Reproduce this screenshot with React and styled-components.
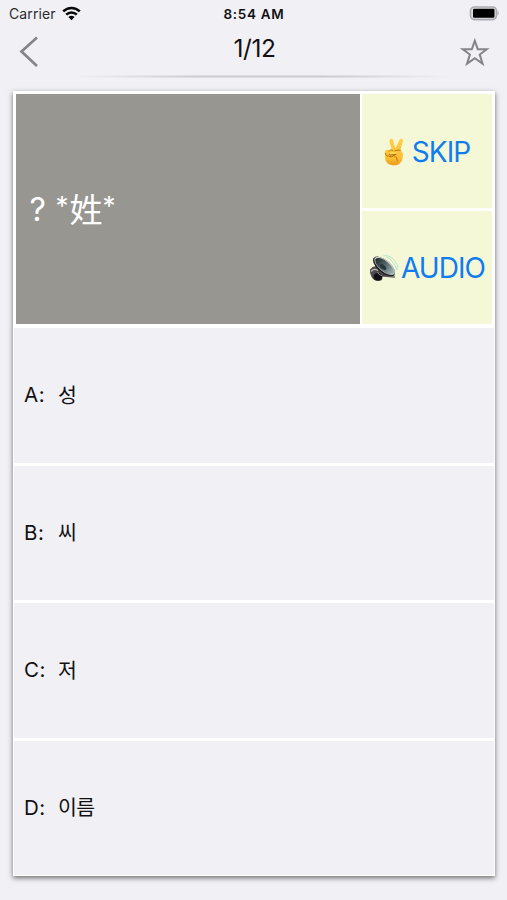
import React from "react";
import styled, { createGlobalStyle } from "styled-components";

const colors = {
  background: "#f0f0f5",
  text: "#111114",
  grey: "#979690",
  yellow: "#f5f8d7",
  blue: "#107cf0",
  icon: "#858589",
};

const GlobalStyle = createGlobalStyle`
  * {
    box-sizing: border-box;
  }

  body {
    margin: 0;
    background: ${colors.background};
    color: ${colors.text};
    font-family: Inter, "Noto Sans CJK KR", sans-serif;
  }
`;

const Screen = styled.div`
  height: 900px;
  width: 507px;
  overflow: hidden;
`;

const StatusBar = styled.div`
  display: grid;
  grid-template-columns: 1fr auto 1fr;
  align-items: center;
  height: 27px;
  padding: 0 7px 0 9px;
`;

const Carrier = styled.div`
  display: flex;
  align-items: center;
  gap: 6px;
  font-size: 14px;
  letter-spacing: 0.1px;
  color: #2c2c30;
`;

const Time = styled.div`
  margin-right: 1px;
  font-size: 13.5px;
  font-weight: 600;
  letter-spacing: 0.7px;
`;

const Battery = styled.svg`
  justify-self: end;
`;

const Header = styled.header`
  display: flex;
  justify-content: space-between;
  align-items: flex-start;
  height: 48px;
  padding: 0 17px 0 19px;
`;

const IconButton = styled.button`
  display: flex;
  width: 30px;
  margin-top: ${({ $top }) => $top};
  padding: 0;
  border: none;
  background: none;
`;

const Counter = styled.h1`
  margin: 6px 0 0;
  font-size: 24.5px;
  font-weight: 400;
  line-height: 30px;
  letter-spacing: -0.4px;
`;

const Divider = styled.div`
  height: 3px;
  margin: 0 57px 0 75px;
  background: linear-gradient(90deg, transparent, #c9c9cd 35%, #c9c9cd 65%, transparent);
  clip-path: inset(0.5px 0);
`;

const Card = styled.main`
  width: 482px;
  height: 785px;
  margin: 13px 0 0 13px;
  padding: 3px 0 1px;
  background: #fff;
  box-shadow: 0 2px 5px rgba(0, 0, 0, 0.55);
`;

const Top = styled.section`
  display: grid;
  grid-template-columns: 344px 130px;
  gap: 2.5px;
  height: 230px;
  margin: 0 2.5px 4px;
`;

const Question = styled.div`
  display: flex;
  align-items: center;
  padding: 0 0 2px 14px;
  background: ${colors.grey};
  color: #fff;
  font-family: "Noto Sans CJK SC", sans-serif;
  font-size: 33px;
  font-weight: 400;
`;

const Mark = styled.span`
  width: 26px;
  padding-top: 3px;
  font-family: Inter, sans-serif;
  font-size: 32px;
`;

const Star = styled.span`
  width: 14px;
  padding-bottom: 5px;
  font-family: Inter, sans-serif;
  font-size: 26px;
`;

const Actions = styled.div`
  display: grid;
  grid-template-rows: 1fr 1fr;
  gap: 3px;
`;

const Action = styled.button`
  display: flex;
  justify-content: center;
  align-items: center;
  gap: ${({ $gap }) => $gap};
  padding: 2px 0 0;
  border: none;
  background: ${colors.yellow};
  color: ${colors.blue};
  font-family: Inter, sans-serif;
  font-size: 28px;
  letter-spacing: ${({ $spacing }) => $spacing};
`;

const Answers = styled.section`
  display: grid;
  grid-template-rows: repeat(4, 1fr);
  gap: 3px;
  height: 547px;
  padding: 0 1px;
`;

const Answer = styled.div`
  display: flex;
  align-items: center;
  padding-left: 10px;
  background: ${colors.background};
  font-size: 20.5px;
  line-height: 30px;
`;

const Letter = styled.span`
  width: 34px;
  letter-spacing: 0.5px;
`;

const Word = styled.span`
  padding-bottom: 3px;
  font-family: "Noto Sans CJK KR", sans-serif;
  letter-spacing: -0.7px;
`;

const answers = [
  { letter: "A", word: "성" },
  { letter: "B", word: "씨" },
  { letter: "C", word: "저" },
  { letter: "D", word: "이름" },
];

const Wifi = () => (
  <svg width="19" height="15" viewBox="0 0 19 15">
    <g fill="none" stroke="#08080a" strokeWidth="2.6">
      <path d="M1.2 5.4C6 .8 13 .8 17.8 5.4" />
      <path d="M4.2 8.6C7.2 5.7 11.8 5.7 14.8 8.6" />
    </g>
    <path d="M6.4 11.1Q9.5 8.5 12.6 11.1L9.5 14.2Z" fill="#08080a" />
  </svg>
);

const Victory = () => (
  <svg width="20" height="28" viewBox="0 0 20 28">
    <defs>
      <linearGradient id="skin" x1="0" y1="0" x2="0" y2="1">
        <stop offset="0" stopColor="#ffd04b" />
        <stop offset="0.75" stopColor="#fdbd32" />
        <stop offset="1" stopColor="#e99819" />
      </linearGradient>
    </defs>
    <path
      d="M6.1 1.2C7.5.3 8.8 1.1 9.2 2.5L11.4 10.5 15.4 2.1C16 .8 17.3.5 18.4 1.3 19.2 1.9 19.1 2.8 18.8 3.8L16.4 12.2C18.5 13.8 19.2 15.7 18.9 18.2 18.5 23.6 15.5 27.3 10.2 27.3 5.1 27.3 1.1 24.3 1 19.4L1 14.4C1 12.5 2.7 11.5 4.4 12L7.7 11.3 5.5 3.8C5.2 2.6 5.3 1.8 6.1 1.2Z"
      fill="url(#skin)"
    />
    <path
      d="M1.3 15.4C2.4 18.9 5 19.1 5.5 16.2M5.3 13.1C6.1 11.4 8.9 11.5 9.3 13.5M5.3 18.5Q8.2 20.1 10 17.5M10.8 12.8Q14.5 11.4 16.4 12.2M10.2 17.7Q13.4 18.7 13.4 22.7"
      fill="none"
      stroke="#ba7410"
      strokeWidth="1"
      strokeLinecap="round"
    />
    <path d="M6 15.1L9.3 13.5Q13 14 12.8 16.2L7.2 17.1Q5.2 16.8 6 15.1Z" fill="#ffd65a" />
    <path d="M6 17.1L12.4 16.4" stroke="#a95f0b" strokeWidth="1" />
  </svg>
);

const Speaker = () => (
  <svg width="31" height="30" viewBox="0 0 31 30">
    <defs>
      <linearGradient id="cone" x1="0" y1="0" x2="1" y2="0">
        <stop offset="0" stopColor="#202829" />
        <stop offset="0.5" stopColor="#57696c" />
        <stop offset="1" stopColor="#a5b8b8" />
      </linearGradient>
      <linearGradient id="rim" x1="0" y1="0" x2="1" y2="1">
        <stop offset="0" stopColor="#3b3a3d" />
        <stop offset="0.5" stopColor="#17181a" />
        <stop offset="1" stopColor="#8f888c" />
      </linearGradient>
    </defs>
    <path d="M4 5L8 18 13 23.5 26 25 25 19Z" fill="url(#rim)" />
    <path d="M1 16.5Q4 12.5 8.5 13.5L14.5 18.5 13 27Q8 29.5 4 26Q.5 21.5 1 16.5Z" fill="#4c4a4d" />
    <ellipse cx="8.8" cy="23.8" rx="4.2" ry="3.8" fill="#111114" />
    <path d="M2 18.5Q5 15 9 17.5" fill="none" stroke="#bdbbbc" strokeWidth="1.2" />
    <path d="M8.5 19Q10 22.5 13 22.5" fill="none" stroke="#8f8b8e" />
    <ellipse cx="15" cy="13.4" rx="13.2" ry="6.4" transform="rotate(40 15 13.4)" fill="#1a1c1e" />
    <ellipse cx="15.6" cy="12.9" rx="12.5" ry="5.6" transform="rotate(40 15.6 12.9)" fill="#ccd4cf" />
    <ellipse cx="15.6" cy="13.2" rx="11.5" ry="4.9" transform="rotate(40 15.6 13.2)" fill="url(#cone)" />
    <ellipse cx="14" cy="14" rx="3.8" ry="2.1" transform="rotate(40 14 14)" fill="#25383d" />
    <g fill="none" stroke="#abe2cb" strokeWidth="0.8">
      <path d="M14 3Q20 1 26 8Q30 13 28 17" />
      <path d="M17 4Q24 6 28 17" />
    </g>
  </svg>
);

function App() {
  return (
    <Screen>
      <GlobalStyle />
      <StatusBar>
        <Carrier>
          Carrier
          <Wifi />
        </Carrier>
        <Time>8:54 AM</Time>
        <Battery width="31" height="16" viewBox="0 0 31 16">
          <rect x="1.5" y="1" width="26" height="12.6" rx="4" fill="#dedee0" stroke="#aaaab0" strokeWidth="1.6" />
          <rect x="4" y="2.8" width="21.5" height="9" rx="1.2" fill="#000" />
          <path d="M28.6 4.6Q31 7.1 28.6 9.6Z" fill="#aaaab0" />
        </Battery>
      </StatusBar>
      <Header>
        <IconButton $top="9px" aria-label="Back">
          <svg width="22" height="32" viewBox="0 0 22 32">
            <path d="M18 1.5L2.5 15.5 18 30" fill="none" stroke={colors.icon} strokeWidth="2.7" />
          </svg>
        </IconButton>
        <Counter>1/12</Counter>
        <IconButton $top="10px" aria-label="Favourite">
          <svg width="31" height="31" viewBox="0 0 31 31">
            <path
              d="M15.3 3.5L18.4 12.2H27.6L20.4 17.6 23.3 27 15.3 21.4 7.3 27 10.2 17.6 3 12.2H12.2Z"
              fill="none"
              stroke={colors.icon}
              strokeWidth="2.1"
            />
          </svg>
        </IconButton>
      </Header>
      <Divider />
      <Card>
        <Top>
          <Question>
            <Mark>?</Mark>
            <Star>*</Star>
            姓
            <Star>*</Star>
          </Question>
          <Actions>
            <Action $gap="8px" $spacing="-0.9px">
              <Victory />
              SKIP
            </Action>
            <Action $gap="1px" $spacing="-0.9px">
              <Speaker />
              AUDIO
            </Action>
          </Actions>
        </Top>
        <Answers>
          {answers.map(({ letter, word }) => (
            <Answer key={letter}>
              <Letter>{letter}:</Letter>
              <Word>{word}</Word>
            </Answer>
          ))}
        </Answers>
      </Card>
    </Screen>
  );
}

export default App;
